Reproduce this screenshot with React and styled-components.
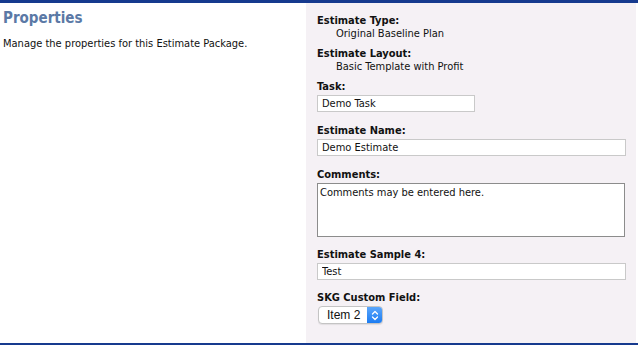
import React, { useState } from 'react';
import styled, { createGlobalStyle } from 'styled-components';

const GlobalStyle = createGlobalStyle`
  html, body {
    margin: 0;
    padding: 0;
    background: #ffffff;
  }
  body {
    font-family: Tahoma, "DejaVu Sans Condensed", "Liberation Sans", sans-serif;
    font-size: 11px;
    color: #111;
  }
`;

const Page = styled.div`
  width: 638px;
  height: 345px;
  box-sizing: border-box;
  border-top: 3px solid #163a8e;
  border-bottom: 2px solid #163a8e;
  display: flex;
`;

const InfoColumn = styled.div`
  width: 306px;
  padding: 6px 0 0 3px;
  box-sizing: border-box;
`;

const Title = styled.h1`
  margin: 0;
  font-size: 15px;
  line-height: 19px;
  font-weight: bold;
  color: #5b79a6;
`;

const Description = styled.p`
  margin: 9px 0 0;
  font-size: 11px;
  line-height: 13px;
`;

const Panel = styled.div`
  width: 330px;
  background: #f5f1f5;
  padding: 11px 0 0 11px;
  box-sizing: border-box;
`;

const Field = styled.div`
  margin-bottom: ${(p) => p.$gap || 7}px;
`;

const Label = styled.div`
  font-weight: bold;
  line-height: 13px;
  margin-bottom: ${(p) => (p.$tight ? 0 : 2)}px;
`;

const Value = styled.div`
  line-height: 13px;
  padding-left: 19px;
`;

const TextInput = styled.input`
  display: block;
  box-sizing: border-box;
  width: ${(p) => p.$width}px;
  height: 17px;
  margin: 0;
  padding: 0 4px;
  border: 1px solid #c9c9c9;
  background: #fff;
  font: inherit;
  color: #111;
  outline: none;
`;

const TextArea = styled.textarea`
  display: block;
  box-sizing: border-box;
  width: 308px;
  height: 54px;
  margin: 0;
  padding: 2px 2px;
  border: 1px solid #8c8c8c;
  background: #fff;
  font: inherit;
  line-height: 13px;
  color: #111;
  resize: none;
  outline: none;
`;

const SelectBox = styled.div`
  display: inline-flex;
  align-items: stretch;
  margin-left: 1px;
  height: 18px;
  width: 65px;
  box-sizing: border-box;
  border: 1px solid #c4c4c4;
  border-radius: 4px;
  background: #fff;
  overflow: hidden;
  box-shadow: 0 1px 1px rgba(0, 0, 0, 0.08);
`;

const SelectText = styled.span`
  flex: 1;
  padding-left: 8px;
  font-family: "Liberation Sans", Arial, sans-serif;
  font-size: 12px;
  line-height: 16px;
  color: #111;
`;

const SelectButton = styled.span`
  width: 15px;
  background: linear-gradient(#5aa6fb, #1c7cf2);
  display: flex;
  align-items: center;
  justify-content: center;
`;

const Arrows = () => (
  <svg width="8" height="11" viewBox="0 0 8 11" fill="none">
    <path d="M1.5 4 L4 1.5 L6.5 4" stroke="#fff" strokeWidth="1.3" strokeLinecap="round" strokeLinejoin="round" />
    <path d="M1.5 7 L4 9.5 L6.5 7" stroke="#fff" strokeWidth="1.3" strokeLinecap="round" strokeLinejoin="round" />
  </svg>
);

const App = () => {
  const [task, setTask] = useState('Demo Task');
  const [name, setName] = useState('Demo Estimate');
  const [comments, setComments] = useState('Comments may be entered here.');
  const [sample, setSample] = useState('Test');

  return (
    <>
      <GlobalStyle />
      <Page>
        <InfoColumn>
          <Title>Properties</Title>
          <Description>Manage the properties for this Estimate Package.</Description>
        </InfoColumn>
        <Panel>
          <Field>
            <Label $tight>Estimate Type:</Label>
            <Value>Original Baseline Plan</Value>
          </Field>
          <Field>
            <Label $tight>Estimate Layout:</Label>
            <Value>Basic Template with Profit</Value>
          </Field>
          <Field $gap={12}>
            <Label>Task:</Label>
            <TextInput $width={158} value={task} onChange={(e) => setTask(e.target.value)} />
          </Field>
          <Field $gap={12}>
            <Label>Estimate Name:</Label>
            <TextInput $width={309} value={name} onChange={(e) => setName(e.target.value)} />
          </Field>
          <Field $gap={11}>
            <Label>Comments:</Label>
            <TextArea value={comments} onChange={(e) => setComments(e.target.value)} />
          </Field>
          <Field $gap={11}>
            <Label>Estimate Sample 4:</Label>
            <TextInput $width={309} value={sample} onChange={(e) => setSample(e.target.value)} />
          </Field>
          <Field>
            <Label>SKG Custom Field:</Label>
            <SelectBox>
              <SelectText>Item 2</SelectText>
              <SelectButton>
                <Arrows />
              </SelectButton>
            </SelectBox>
          </Field>
        </Panel>
      </Page>
    </>
  );
};

export default App;
